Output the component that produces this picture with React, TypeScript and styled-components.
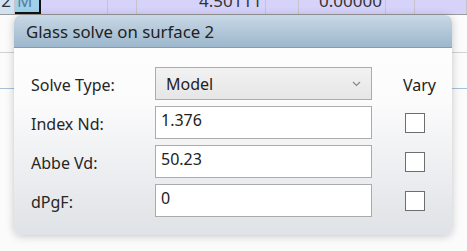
import React from "react";
import styled, { createGlobalStyle } from "styled-components";

const Global = createGlobalStyle`
  html, body { margin: 0; padding: 0; background: #fbfbfb; }
  body { width: 467px; height: 251px; overflow: hidden; font-family: "Noto Sans", "Open Sans", sans-serif; }
`;

const Page = styled.div`
  position: relative;
  width: 467px;
  height: 251px;
  overflow: hidden;
  background: #fbfbfb;
`;

const Grid = styled.div`
  display: flex;
  flex-direction: column;
`;

const TopRow = styled.div`
  display: flex;
  height: 26px;
  margin-top: -12px;
  border-bottom: 1px solid #9a9a9a;
  background: #d6d3fb;
`;

const Cell = styled.div<{ $w: number; $bg?: string; $sel?: boolean }>`
  flex: 0 0 ${(p) => p.$w}px;
  box-sizing: border-box;
  height: 26px;
  line-height: 26px;
  font-size: 17px;
  color: #333;
  text-align: right;
  padding-right: 3px;
  background: ${(p) => p.$bg || "transparent"};
  border-right: 1px solid ${(p) => (p.$sel ? "#111" : "#c9c2c8")};
  ${(p) => (p.$sel ? "border-right-width: 2px; border-bottom: 2px solid #111;" : "")}
  overflow: hidden;
  white-space: nowrap;
`;

const PlainRow = styled.div<{ $h: number; $line: string }>`
  height: ${(p) => p.$h}px;
  border-bottom: 1px solid ${(p) => p.$line};
  background: #fbfbfb;
`;

const Dialog = styled.div`
  position: absolute;
  left: 14px;
  top: 15px;
  width: 438px;
  height: 220px;
  border-radius: 7px;
  overflow: hidden;
  box-shadow: 0 1px 8px rgba(0, 0, 0, 0.22);
  display: flex;
  flex-direction: column;
  background: linear-gradient(#ffffff, #fbfbfc 40%, #dfe2e6);
`;

const TitleBar = styled.div`
  height: 33px;
  flex: 0 0 33px;
  box-sizing: border-box;
  padding-left: 12px;
  display: flex;
  align-items: center;
  font-size: 16.8px;
  color: #222;
  background: linear-gradient(#c8d8e6, #9db7cc);
  border-bottom: 1px solid #7e9db7;
`;

const Body = styled.div`
  display: grid;
  grid-template-columns: 124px 217px 1fr;
  grid-auto-rows: 33px;
  row-gap: 6px;
  padding: 19px 0 0 17px;
`;

const Label = styled.div`
  font-size: 16px;
  color: #262626;
  display: flex;
  align-items: center;
  padding-top: 2px;
`;

const Combo = styled.div`
  box-sizing: border-box;
  border: 1px solid #acacac;
  background: linear-gradient(#f2f2f2, #e6e6e6);
  display: flex;
  align-items: center;
  justify-content: space-between;
  padding: 0 10px 0 10px;
  font-size: 16px;
  color: #222;
`;

const Chevron = styled.svg`
  width: 9px;
  height: 6px;
`;

const TextBox = styled.div`
  box-sizing: border-box;
  border: 1px solid #ababab;
  background: #fff;
  font-size: 16px;
  color: #222;
  padding: 2px 0 0 5px;
  line-height: 22px;
`;

const VaryCell = styled.div`
  display: flex;
  align-items: center;
  justify-content: flex-start;
  padding-left: 33px;
`;

const VaryLabel = styled.div`
  font-size: 16px;
  color: #222;
  padding-left: 31px;
  display: flex;
  align-items: center;
  padding-top: 3px;
`;

const Check = styled.div`
  width: 20px;
  height: 20px;
  box-sizing: border-box;
  border: 1.5px solid #6e6e6e;
  background: #fff;
`;

const rows = [
  { label: "Index Nd:", value: "1.376" },
  { label: "Abbe Vd:", value: "50.23" },
  { label: "dPgF:", value: "0" },
];

export default function App() {
  return (
    <Page>
      <Global />
      <Grid>
        <TopRow>
          <Cell $w={15} $bg="#cfe3f4">2</Cell>
          <Cell $w={26} $bg="#9fd1ea" $sel style={{ textAlign: "left", paddingLeft: 2, color: "#5a7d9a" }}>M</Cell>
          <Cell $w={67} />
          <Cell $w={29} />
          <Cell $w={129}>4.50111</Cell>
          <Cell $w={33} />
          <Cell $w={87}>0.00000</Cell>
          <Cell $w={29} />
          <Cell $w={52} />
        </TopRow>
        <PlainRow $h={37} $line="#d2d2d2" />
        <PlainRow $h={35} $line="#a9bfd6" />
      </Grid>
      <Dialog>
        <TitleBar>Glass solve on surface 2</TitleBar>
        <Body>
          <Label>Solve Type:</Label>
          <Combo>
            <span>Model</span>
            <Chevron viewBox="0 0 9 6">
              <path d="M1 1 L4.5 4.5 L8 1" fill="none" stroke="#888" strokeWidth="1.2" />
            </Chevron>
          </Combo>
          <VaryLabel>Vary</VaryLabel>
          {rows.map((r) => (
            <React.Fragment key={r.label}>
              <Label>{r.label}</Label>
              <TextBox>{r.value}</TextBox>
              <VaryCell>
                <Check />
              </VaryCell>
            </React.Fragment>
          ))}
        </Body>
      </Dialog>
    </Page>
  );
}
